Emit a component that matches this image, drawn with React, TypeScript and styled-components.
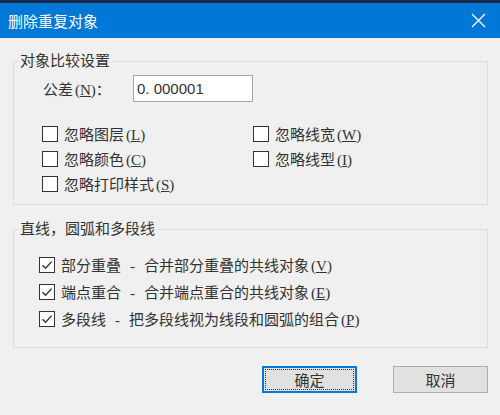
import React from "react"
import styled, { createGlobalStyle } from "styled-components"

const GlobalStyle = createGlobalStyle`
  html, body {
    margin: 0;
    padding: 0;
    background: #f0f0f0;
  }
  body {
    width: 500px;
    height: 415px;
    overflow: hidden;
    font-family: "Liberation Serif", "Noto Sans CJK SC", serif;
  }
  * {
    text-autospace: no-autospace;
  }
`

const Window = styled.div`
  width: 500px;
  height: 415px;
  display: flex;
  flex-direction: column;
  background: #f0f0f0;
`

const TopStrip = styled.div`
  height: 3px;
  background: #1a2b47;
`

const TitleBar = styled.div`
  height: 35px;
  background: #0078d7;
  display: flex;
  align-items: center;
  justify-content: space-between;
  padding: 0 14px 0 8px;
`

const Title = styled.span`
  color: #ffffff;
  font-family: "Noto Sans CJK SC", sans-serif;
  font-size: 15px;
  line-height: 20px;
`

const CloseButton = styled.span`
  display: flex;
  align-items: center;
  justify-content: center;
  width: 15px;
  height: 16px;
`

const Body = styled.div`
  display: flex;
  flex-direction: column;
  padding: 13px 12px 0 13px;
`

const Group = styled.fieldset<{ $mt?: number; $pt: number; $pb: number }>`
  margin: ${(p) => p.$mt ?? 0}px 0 0 0;
  padding: ${(p) => p.$pt}px 0 ${(p) => p.$pb}px 0;
  border: 1px solid #dcdcdc;
  min-width: 0;
`

const Legend = styled.legend`
  margin-left: 4px;
  padding: 0 2px;
  font-size: 15px;
  line-height: 20px;
  color: #333;
`

const FieldRow = styled.div`
  display: flex;
  align-items: center;
  height: 27px;
  padding-left: 29px;
`

const FieldLabel = styled.span`
  width: 90px;
  font-size: 15px;
  color: #333;
`

const TextBox = styled.div`
  box-sizing: border-box;
  width: 120px;
  height: 27px;
  background: #ffffff;
  border: 1px solid #a6a6a6;
  display: flex;
  align-items: center;
  padding-left: 3px;
  font-family: "Liberation Sans", "Noto Sans CJK SC", sans-serif;
  font-size: 15px;
  color: #333;
`

const OptionGrid = styled.div`
  display: grid;
  grid-template-columns: 211px 1fr;
  grid-auto-rows: 25px;
  margin-top: 19px;
  padding-left: 28px;
`

const OptionList = styled.div`
  display: grid;
  grid-auto-rows: 27px;
  padding-left: 25px;
`

const Option = styled.label`
  display: flex;
  align-items: center;
  gap: 6px;
  font-size: 15px;
  color: #333;
  white-space: nowrap;
`

const OptionText = styled.span`
  white-space: nowrap;
`

const KeyHint = styled.span`
  margin-left: 2px;
`

const Box = styled.span`
  box-sizing: border-box;
  width: 16px;
  height: 16px;
  border: 1px solid #333;
  background: #ffffff;
  display: flex;
  align-items: center;
  justify-content: center;
  flex-shrink: 0;
`

const Dash = styled.span`
  display: inline-block;
  width: 23px;
  text-align: center;
`

const ButtonRow = styled.div`
  display: flex;
  justify-content: flex-end;
  gap: 36px;
  margin-top: 18px;
`

const Button = styled.button<{ $focused?: boolean }>`
  box-sizing: border-box;
  width: 95px;
  height: 27px;
  background: #e1e1e1;
  border: ${(p) => (p.$focused ? "2px solid #0078d7" : "1px solid #adadad")};
  font-family: "Liberation Serif", "Noto Sans CJK SC", serif;
  font-size: 15px;
  color: #333;
  padding: 0;
  outline: ${(p) => (p.$focused ? "1px dotted #333" : "none")};
  outline-offset: -4px;
`

const Check = ({ checked }: { checked?: boolean }) => (
  <Box>
    {checked && (
      <svg width="12" height="12" viewBox="0 0 12 12">
        <path d="M1.5 6.2 L4.6 9.2 L10.6 2.6" fill="none" stroke="#333" strokeWidth="1.4" />
      </svg>
    )}
  </Box>
)

const Key = ({ k }: { k: string }) => (
  <KeyHint>
    (<u>{k}</u>)
  </KeyHint>
)

const CheckOption = ({
  checked,
  children,
}: {
  checked?: boolean
  children: React.ReactNode
}) => (
  <Option>
    <Check checked={checked} />
    <OptionText>{children}</OptionText>
  </Option>
)

export default function App() {
  return (
    <Window>
      <GlobalStyle />
      <TopStrip />
      <TitleBar>
        <Title>删除重复对象</Title>
        <CloseButton>
          <svg width="15" height="15" viewBox="0 0 15 15">
            <path d="M1 1 L14 14 M14 1 L1 14" stroke="#ffffff" strokeWidth="1.3" />
          </svg>
        </CloseButton>
      </TitleBar>
      <Body>
        <Group $pt={4} $pb={8}>
          <Legend>对象比较设置</Legend>
          <FieldRow>
            <FieldLabel>
              公差<Key k="N" />：
            </FieldLabel>
            <TextBox>0. 000001</TextBox>
          </FieldRow>
          <OptionGrid>
            <CheckOption>
              忽略图层<Key k="L" />
            </CheckOption>
            <CheckOption>
              忽略线宽<Key k="W" />
            </CheckOption>
            <CheckOption>
              忽略颜色<Key k="C" />
            </CheckOption>
            <CheckOption>
              忽略线型<Key k="I" />
            </CheckOption>
            <CheckOption>
              忽略打印样式<Key k="S" />
            </CheckOption>
          </OptionGrid>
        </Group>
        <Group $mt={14} $pt={12} $pb={15}>
          <Legend>直线，圆弧和多段线</Legend>
          <OptionList>
            <CheckOption checked>
              部分重叠<Dash>-</Dash>合并部分重叠的共线对象<Key k="V" />
            </CheckOption>
            <CheckOption checked>
              端点重合<Dash>-</Dash>合并端点重合的共线对象<Key k="E" />
            </CheckOption>
            <CheckOption checked>
              多段线<Dash>-</Dash>把多段线视为线段和圆弧的组合<Key k="P" />
            </CheckOption>
          </OptionList>
        </Group>
        <ButtonRow>
          <Button $focused>确定</Button>
          <Button>取消</Button>
        </ButtonRow>
      </Body>
    </Window>
  )
}
